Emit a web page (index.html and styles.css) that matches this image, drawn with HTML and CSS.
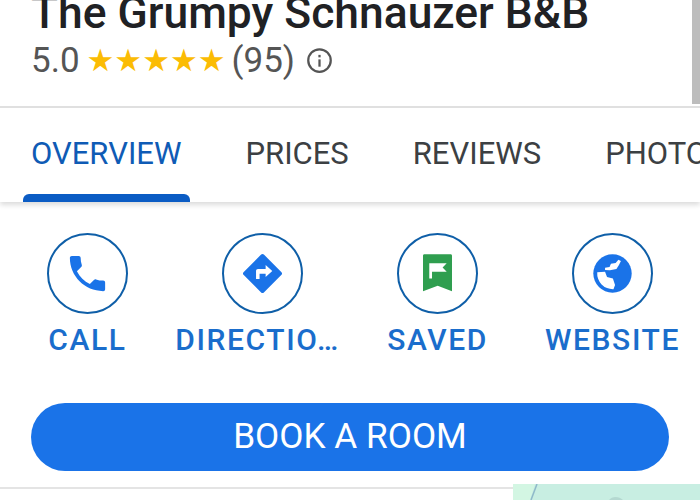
FILE: index.html
```html
<!DOCTYPE html>
<html lang="en">
<head>
    <meta charset="UTF-8">
    <meta name="viewport" content="width=device-width, initial-scale=1.0">
    <title>The Grumpy Schnauzer B&amp;B</title>
    <link rel="stylesheet" href="styles.css">
</head>
<body>
    <header class="place-header">
        <h1 class="place-name">The Grumpy Schnauzer B&amp;B</h1>
        <div class="rating">
            <span>5.0</span>
            <span class="stars">★★★★★</span>
            <span class="review-count">(95)</span>
            <svg class="info-icon" viewBox="0 0 24 24" width="27" height="27">
                <circle cx="12" cy="12" r="10" fill="none" stroke="#555" stroke-width="2"/>
                <rect x="11" y="11" width="2" height="6.5" fill="#555"/>
                <rect x="11" y="7" width="2" height="2.2" fill="#555"/>
            </svg>
        </div>
        <div class="scrollbar"></div>
    </header>

    <nav class="tabs">
        <div class="tab active">OVERVIEW</div>
        <div class="tab">PRICES</div>
        <div class="tab">REVIEWS</div>
        <div class="tab">PHOTOS</div>
    </nav>

    <section class="actions">
        <div class="action">
            <div class="action-circle">
                <svg viewBox="0 0 24 24" width="47" height="47">
                    <path fill="#1a73e8" d="M6.6 10.8c1.4 2.8 3.8 5.1 6.6 6.6l2.2-2.2c.3-.3.7-.4 1-.2 1.1.4 2.3.6 3.6.6.6 0 1 .4 1 1V20c0 .6-.4 1-1 1C10.6 21 3 13.400 3 4c0-.6.4-1 1-1h3.500c.6 0 1 .4 1 1 0 1.300.2 2.500.6 3.600.1.300 0 .7-.2 1z"/>
                </svg>
            </div>
            <div class="action-label">CALL</div>
        </div>
        <div class="action">
            <div class="action-circle">
                <svg viewBox="0 0 24 24" width="47" height="47">
                    <path fill="#1a73e8" d="M21.700 11.300l-9-9c-.4-.4-1-.4-1.400 0l-9 9c-.4.4-.4 1 0 1.400l9 9c.4.4 1 .4 1.400 0l9-9c.4-.4.4-1 0-1.400z"/>
                    <path fill="#fff" d="M13.600 13.800V12.100H10.500V14.800H8.700V10.700c0-.6.4-1 1-1H13.600V7.700L17 10.700z"/>
                </svg>
            </div>
            <div class="action-label action-label-cut">DIRECTIO…</div>
        </div>
        <div class="action">
            <div class="action-circle">
                <svg viewBox="0 0 24 24" width="47" height="47">
                    <path fill="#2f9e4f" d="M5.300 2.200h13.400c.4 0 .7.300.7.700V21l-7.300-2.800L4.600 21V2.900c0-.4.300-.7.700-.7z"/>
                    <path fill="#fff" d="M7.800 6.800h8.900l-2.100 2.100 2.100 2.200H9.200v3.400H7.800z"/>
                </svg>
            </div>
            <div class="action-label">SAVED</div>
        </div>
        <div class="action">
            <div class="action-circle">
                <svg viewBox="0 0 24 24" width="47" height="47">
                    <circle cx="12" cy="12" r="9.800" fill="#1a73e8"/>
                    <path fill="#fff" d="M8.200 10.200V9l2.300-.3.700-1.700 2.400-.4L15 5l1.300.6-1 2.100L14 9.700l-3.300.7z"/>
                    <path fill="#fff" d="M4.200 11.400l4-.3 1 2.700 3 .7 1.100 3.400-.8 2.100A8 8 0 0 1 4.200 11.400z"/>
                </svg>
            </div>
            <div class="action-label">WEBSITE</div>
        </div>
    </section>

    <div class="book-row">
        <button class="book-button">BOOK A ROOM</button>
    </div>

    <footer class="bottom-row">
        <div class="divider"></div>
        <svg class="map-thumb" viewBox="0 0 187 16" width="187" height="16">
            <rect width="187" height="16" fill="#c8eee2"/>
            <path d="M0 0h22L17 16H0z" fill="#d3f6e3"/>
            <path d="M24 0L18 16" stroke="#8fb9c9" stroke-width="1.500" fill="none"/>
            <path d="M96 16c3-4 10-4 14 0z" fill="#b4d8d0"/>
        </svg>
    </footer>
</body>
</html>
```

FILE: styles.css
```css
body {
    font-family: Roboto, "Liberation Sans", sans-serif;
    background-color: white;
    margin: 0;
    width: 700px;
    height: 500px;
    overflow: hidden;
}

.place-header {
    position: relative;
    height: 106px;
    padding-left: 31px;
    border-bottom: 2px solid #e0e0e0;
    overflow: hidden;
}

.place-name {
    margin: -13px 0 0;
    font-size: 44.4px;
    line-height: 52px;
    font-weight: 500;
    color: #202124;
    white-space: nowrap;
}

.rating {
    display: flex;
    align-items: center;
    gap: 9px;
    margin-top: 1px;
    font-size: 35px;
    line-height: 41px;
    color: #555;
}

.stars {
    margin-left: -2px;
    color: #fbbc04;
    font-family: "DejaVu Sans", sans-serif;
    font-size: 31px;
}

.review-count {
    margin-left: -3px;
}

.info-icon {
    margin-left: 2px;
}

.scrollbar {
    position: absolute;
    top: 0;
    right: 0;
    width: 8px;
    height: 104px;
    background-color: #bdbdbd;
}

.tabs {
    display: flex;
    height: 94px;
    padding-left: 23px;
    box-shadow: 0 3px 5px rgba(0, 0, 0, 0.14);
    overflow: hidden;
    white-space: nowrap;
}

.tab {
    flex: none;
    position: relative;
    padding: 28px 9px 0 8px;
    margin-right: 47px;
    font-size: 31px;
    line-height: 36px;
    color: #3c4043;
}

.tab.active {
    color: #0f5bb5;
}

.tab.active::after {
    content: "";
    position: absolute;
    left: 0;
    right: 0;
    bottom: 0;
    height: 8px;
    background-color: #0b5cc4;
    border-radius: 6px 6px 0 0;
}

.actions {
    display: grid;
    grid-template-columns: repeat(4, 175px);
    padding-top: 31px;
}

.action {
    display: flex;
    flex-direction: column;
    align-items: center;
}

.action-circle {
    display: flex;
    align-items: center;
    justify-content: center;
    width: 77px;
    height: 77px;
    border: 2px solid #0f5fa8;
    border-radius: 50%;
}

.action-label {
    margin-top: 8px;
    font-size: 30px;
    line-height: 36px;
    font-weight: 500;
    letter-spacing: 1.6px;
    color: #1a6dcc;
    white-space: nowrap;
}

.action-label-cut {
    margin-right: 10px;
}

.book-row {
    padding: 45px 31px 0;
}

.book-button {
    display: block;
    width: 100%;
    height: 68px;
    padding: 0 0 3px;
    border: none;
    border-radius: 34px;
    background-color: #1a73e8;
    color: white;
    font-family: inherit;
    font-size: 35.2px;
}

.bottom-row {
    display: flex;
    margin-top: 13px;
}

.divider {
    flex: 1;
    height: 2px;
    margin-top: 3px;
    background-color: #e4e4e4;
}

.map-thumb {
    flex: none;
    display: block;
}
```
